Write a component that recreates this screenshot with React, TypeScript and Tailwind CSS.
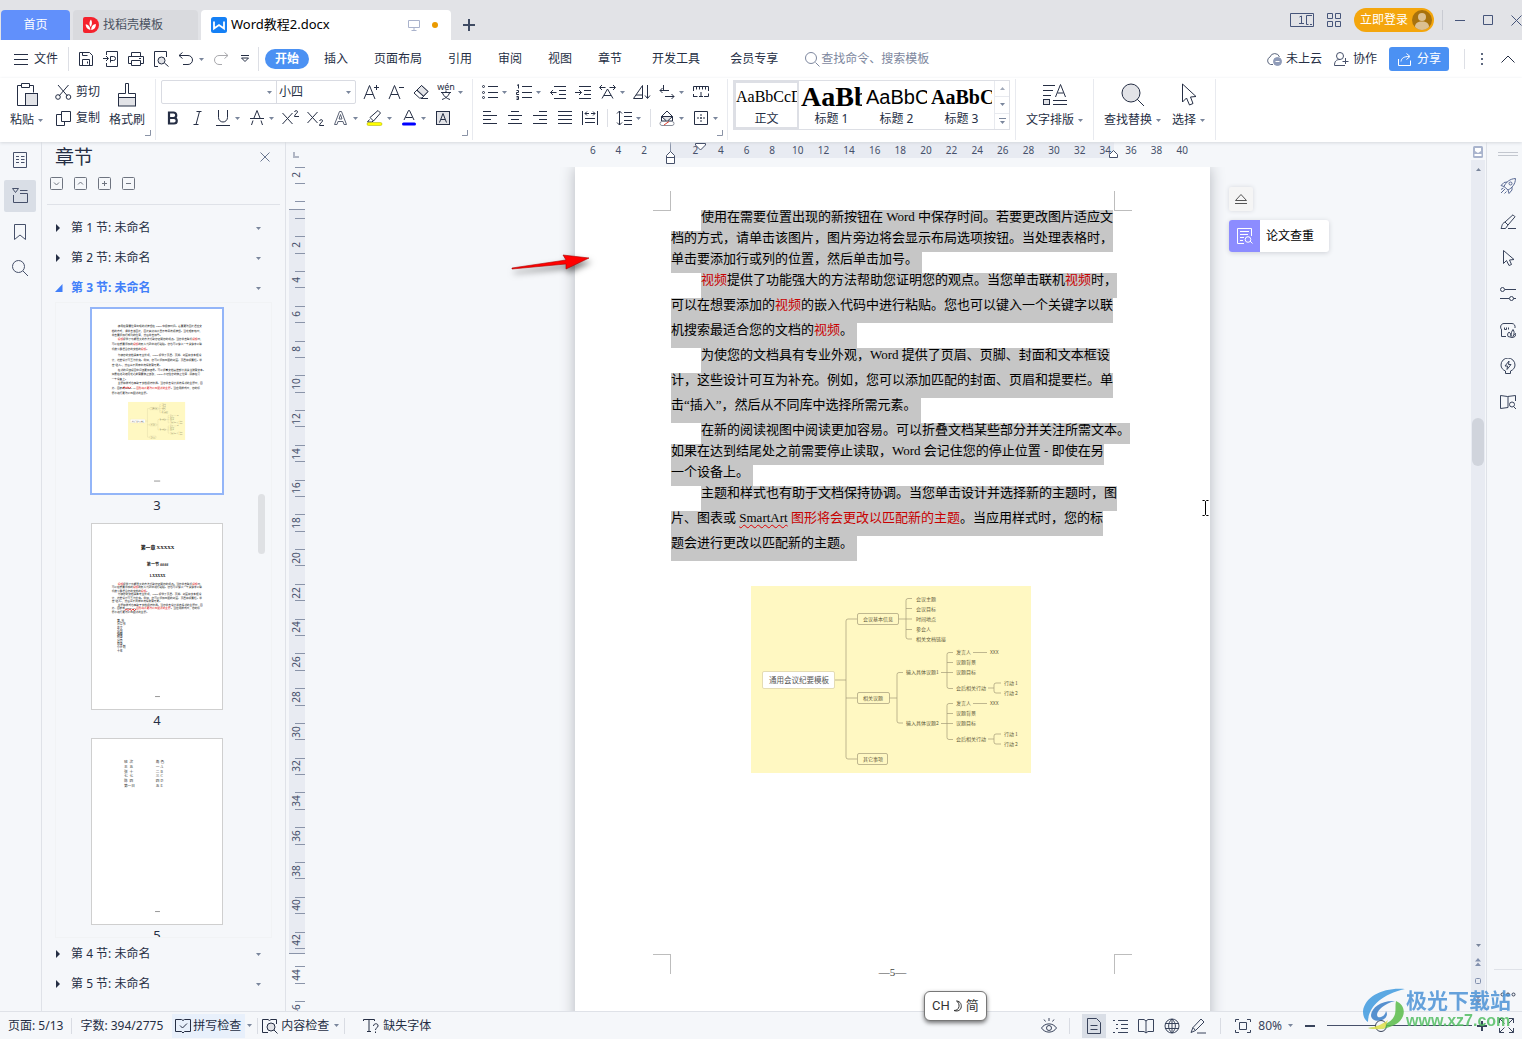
import type { ReactNode } from 'react';

type Part = string | { red?: string; typo?: string };
type Line = { indent?: boolean; end?: boolean; parts: Part[] };

const paragraphs: { loose: boolean; lines: Line[] }[] = [
  {
    loose: false,
    lines: [
      { indent: true, parts: ['使用在需要位置出现的新按钮在 Word 中保存时间。若要更改图片适应文'] },
      { parts: ['档的方式，请单击该图片，图片旁边将会显示布局选项按钮。当处理表格时，'] },
      { end: true, parts: ['单击要添加行或列的位置，然后单击加号。'] },
    ],
  },
  {
    loose: true,
    lines: [
      { indent: true, parts: [{ red: '视频' }, '提供了功能强大的方法帮助您证明您的观点。当您单击联机', { red: '视频' }, '时，'] },
      { parts: ['可以在想要添加的', { red: '视频' }, '的嵌入代码中进行粘贴。您也可以键入一个关键字以联'] },
      { end: true, parts: ['机搜索最适合您的文档的', { red: '视频' }, '。'] },
    ],
  },
  {
    loose: true,
    lines: [
      { indent: true, parts: ['为使您的文档具有专业外观，Word 提供了页眉、页脚、封面和文本框设'] },
      { parts: ['计，这些设计可互为补充。例如，您可以添加匹配的封面、页眉和提要栏。单'] },
      { end: true, parts: ['击“插入”，然后从不同库中选择所需元素。'] },
    ],
  },
  {
    loose: false,
    lines: [
      { indent: true, parts: ['在新的阅读视图中阅读更加容易。可以折叠文档某些部分并关注所需文本。'] },
      { parts: ['如果在达到结尾处之前需要停止读取，Word 会记住您的停止位置 - 即使在另'] },
      { end: true, parts: ['一个设备上。'] },
    ],
  },
  {
    loose: true,
    lines: [
      { indent: true, parts: ['主题和样式也有助于文档保持协调。当您单击设计并选择新的主题时，图'] },
      { parts: ['片、图表或 ', { typo: 'SmartArt' }, ' ', { red: '图形将会更改以匹配新的主题' }, '。当应用样式时，您的标'] },
      { end: true, parts: ['题会进行更改以匹配新的主题。'] },
    ],
  },
];

const styleCells = [
  { name: '正文', sample: 'AaBbCcDd', cls: "font-['Liberation_Serif',serif] text-[16px]" },
  { name: '标题 1', sample: 'AaBb', cls: "font-['Liberation_Serif',serif] text-[28px] font-bold" },
  { name: '标题 2', sample: 'AaBbC', cls: "font-['Liberation_Sans',sans-serif] text-[20px]" },
  { name: '标题 3', sample: 'AaBbC', cls: "font-['Liberation_Serif',serif] text-[20px] font-bold" },
];

const hRuler = [6, 4, 2, 0, 2, 4, 6, 8, 10, 12, 14, 16, 18, 20, 22, 24, 26, 28, 30, 32, 34, 36, 38, 40];
const vRuler = [2, 0, 2, 4, 6, 8, 10, 12, 14, 16, 18, 20, 22, 24, 26, 28, 30, 32, 34, 36, 38, 40, 42, 44, 46];

function Ico({ w = 16, h = 16, d, children, className = '' }: { w?: number; h?: number; d?: string; children?: ReactNode; className?: string }) {
  return (
    <svg width={w} height={h} viewBox={`0 0 ${w} ${h}`} fill="none" stroke="currentColor" className={`shrink-0 ${className}`} aria-hidden="true">
      {d && <path d={d} />}
      {children}
    </svg>
  );
}

function Caret({ className = '' }: { className?: string }) {
  return (
    <svg width="5" height="3" viewBox="0 0 5 3" className={`shrink-0 fill-[#7a869c] ${className}`} aria-hidden="true">
      <path d="M0 0h5L2.500 3z" />
    </svg>
  );
}

function Tool({ label, caret, children }: { label: string; caret?: boolean; children: ReactNode }) {
  return (
    <button aria-label={label} className={`flex h-[26px] shrink-0 items-center ${caret ? 'w-[34px]' : 'w-[25px]'}`}>
      <span className="flex w-6 shrink-0 justify-center">{children}</span>
      {caret && <Caret />}
    </button>
  );
}

function Corner() {
  return <Ico w={6} h={6} d="M5.500 0v5.500H0" className="absolute right-1 bottom-1 text-[#8a93a6]" />;
}

function TitleBar() {
  return (
    <header className="flex h-10 shrink-0 items-end bg-[#e2e3e7] pl-px">
      <button className="h-[30px] w-[69px] rounded-t-sm bg-[#6190fb] text-white">首页</button>
      <button className="ml-[3px] flex h-[30px] w-[125px] items-center rounded-t-sm bg-[#d9dade] pl-[10px] text-[#4a5261]">
        <svg width="16" height="16" viewBox="0 0 16 16" className="mr-1" aria-hidden="true">
          <path d="M2 0h6a8 8 0 0 1 0 16H2a2 2 0 0 1-2-2V2a2 2 0 0 1 2-2z" fill="#f5222d" />
          <path d="M7.500 13C3.500 12 2.500 9 2.800 7.200 5 7.500 7 9 7.500 13zM7.500 10C5.800 7 6.300 4.500 8 2.500 9.500 5 9.300 7.500 7.500 10zM8.300 13c-.2-3.500 1.700-5.800 4.500-6 .4 3-1.300 5.500-4.500 6z" fill="#fff" />
        </svg>
        找稻壳模板
      </button>
      <div className="ml-[3px] flex h-[30px] w-[250px] items-center rounded-t-sm bg-white pr-[13px] pl-[10px] text-black">
        <svg width="16" height="16" viewBox="0 0 16 16" className="mr-1" aria-hidden="true">
          <rect width="16" height="16" rx="2.500" fill="#1580f5" />
          <path d="M3 4.500v7l5-3.500 5 3.500v-7" fill="none" stroke="#fff" strokeWidth="1.800" />
        </svg>
        <span className="text-[13px]">Word教程2.docx</span>
        <Ico w={12} h={12} className="ml-auto text-[#aab3cc]" d="M.5 1.500h11v7H.5zM6 8.500v3M3.500 11.500h5" />
        <span className="ml-3 h-1.5 w-1.5 rounded-full bg-[#ea9a00]" />
      </div>
      <button aria-label="新建标签" className="ml-3 flex h-[30px] w-3 items-center">
        <Ico w={12} h={12} className="text-[#3f4b63]"><path d="M6 0v12M0 6h12" strokeWidth="2" /></Ico>
      </button>

      <div className="ml-auto flex h-10 items-center text-[#46557a]">
        <button aria-label="窗口" className="mr-[13px]">
          <Ico w={24} h={14} d="M.5.500h23v13H.5zM9.500 4l2-1v7M9 10.500h5M22 2.500h-5.500v9h2M20 11.500h2" />
        </button>
        <button aria-label="应用" className="mr-[13px]">
          <Ico w={14} h={14} d="M.5.500h5v5h-5zM8.500.500h5v5h-5zM.5 8.500h5v5h-5zM8.500 8.500h5v5h-5z" />
        </button>
        <button className="flex h-6 w-20 items-center justify-between rounded-full bg-[#f4a60d] pr-0.5 pl-1.5 text-white">
          立即登录
          <svg width="20" height="20" viewBox="0 0 20 20" aria-hidden="true">
            <circle cx="10" cy="10" r="10" fill="#a8720d" />
            <circle cx="10" cy="7" r="4" fill="#dcc091" />
            <path d="M3 17c0-4 3-5.500 7-5.500s7 1.500 7 5.500c-4 4-10 4-14 0z" fill="#dcc091" />
          </svg>
        </button>
        <span className="mx-2 h-5 w-px bg-[#c9cbd2]" />
        <button aria-label="最小化" className="ml-1"><Ico w={10} h={10} d="M0 5.500h10" /></button>
        <button aria-label="最大化" className="ml-[18px]"><Ico w={10} h={10} d="M.5.500h9v9h-9z" /></button>
        <button aria-label="关闭" className="ml-[18px]"><Ico w={11} h={11} d="M.5.500l10 10M10.500.500l-10 10" /></button>
      </div>
    </header>
  );
}

function MenuBar() {
  return (
    <nav className="flex h-[38px] shrink-0 items-center bg-white text-[#252e44]">
      <button className="flex items-center gap-1.5 pl-[14px]">
        <Ico w={14} h={11} d="M0 .5h14M0 5.500h14M0 10.500h14" />
        文件
      </button>
      <span className="ml-[10px] h-6 w-px bg-[#dddfe5]" />
      <button aria-label="保存" className="ml-[9px]">
        <Ico d="M1.500 1.500h10l3 3v10h-13zM4.500 14V8.500h7V14M4.500 1.500v3h5M9.500 10.500v2" />
      </button>
      <button aria-label="输出为PDF" className="ml-[9px]">
        <Ico d="M3.500 4V.5h11v15h-11V12M0 7.500h5M3 5l2.500 2.500L3 10M7.500 5.500v6M7.500 5.500h3a1.500 1.500 0 0 1 0 4h-3" />
      </button>
      <button aria-label="打印" className="ml-[9px]">
        <Ico d="M3.500 5V1.500h9V5M3.500 12.500h-3v-7h15v7h-3M3.500 9.500h9v5h-9zM11 7.500h2" />
      </button>
      <button aria-label="打印预览" className="ml-[9px]">
        <Ico d="M5 15.500H1.500V.5h12V6M11.500 12l4 3.500"><circle cx="8.500" cy="9.500" r="3.500" fill="#e2e3e7" /></Ico>
      </button>
      <button aria-label="撤销" className="ml-[9px] flex items-center gap-[5px]">
        <Ico d="M4.500 1.500L1 4.500l3.500 3M1 4.500h9a4.500 4.500 0 0 1 0 9H5" />
        <Caret />
      </button>
      <button aria-label="恢复" className="ml-[9px] text-[#a9a9ad]">
        <Ico d="M11.500 1.500L15 4.500l-3.500 3M15 4.500H6a4.500 4.500 0 0 0 0 9h3" />
      </button>
      <button aria-label="更多" className="ml-3"><Ico w={8} h={8} d="M0 .5h8M.5 3L4 6.500 7.500 3z" /></button>
      <span className="ml-[9px] h-6 w-px bg-[#dddfe5]" />
      <button className="ml-1.5 h-5 w-11 rounded-full bg-[#4b91f3] font-bold text-white">开始</button>
      <div className="ml-0.5 flex items-center">
        {['插入', '页面布局', '引用', '审阅', '视图', '章节'].map((m) => (
          <button key={m} className="px-[13px]">{m}</button>
        ))}
        <button className="ml-1 px-[13px]">开发工具</button>
        <button className="ml-1 px-[13px]">会员专享</button>
      </div>
      <label className="ml-[14px] flex items-center gap-px text-[#7d879e]">
        <Ico w={15} h={15} d="M10.500 10.500l4 4"><circle cx="6" cy="6" r="5.500" /></Ico>
        <input aria-label="搜索" placeholder="查找命令、搜索模板" className="w-28 bg-transparent outline-none placeholder:text-[#7d879e]" />
      </label>

      <div className="ml-auto flex items-center pr-[7px]">
        <button className="flex items-center gap-1">
          <Ico className="text-[#5d687f]" d="M7 13.500H4.500a4 4 0 0 1-.500-7.500 5 5 0 0 1 9.500 0">
            <circle cx="11.500" cy="10.500" r="4" fill="#8f9bb8" stroke="#8f9bb8" />
            <path d="M9.500 10.500h4" stroke="#fff" />
          </Ico>
          未上云
        </button>
        <button className="ml-3 flex items-center gap-1">
          <Ico w={15} h={14} className="text-[#46506a]" d="M.5 13.500C.5 9.500 2 7.500 6 7.500M.5 13.500H11M11.500 6v6M8.500 9.500h6"><circle cx="6" cy="4" r="3.500" /></Ico>
          协作
        </button>
        <button className="ml-3 flex h-6 w-[60px] items-center gap-1.5 rounded-[3px] bg-[#4b91f3] pl-[9px] text-white">
          <Ico w={13} h={13} d="M.5 6v6.500h12V7.500M3 8.500C3.500 5 6 3.500 11 3.500M8.500.5l3.500 3L8.500 6.500" />
          分享
        </button>
        <span className="ml-[15px] h-5 w-px bg-[#dddfe5]" />
        <button aria-label="更多选项" className="ml-4 flex flex-col gap-[3px]">
          <span className="h-0.5 w-0.5 bg-[#5d687f]" />
          <span className="h-0.5 w-0.5 bg-[#5d687f]" />
          <span className="h-0.5 w-0.5 bg-[#5d687f]" />
        </button>
        <button aria-label="折叠功能区" className="ml-[18px]"><Ico w={14} h={8} d="M.5 7.500L7 1l6.500 6.500" /></button>
      </div>
    </nav>
  );
}

function FontGroup() {
  return (
    <div className="relative w-[317px] shrink-0 border-r border-[#e8eaef] pl-[5px]">
      <div className="flex h-[26px] items-center">
        <div className="mr-[3px] flex h-6 rounded-xs border border-[#d9dbe2]">
          <div className="relative flex w-[115px] items-center border-r border-[#d9dbe2]">
            <select aria-label="字体" className="h-full w-full appearance-none bg-transparent outline-none"><option> </option></select>
            <Caret className="pointer-events-none absolute right-1" />
          </div>
          <div className="relative flex w-[78px] items-center">
            <select aria-label="字号" className="h-full w-full appearance-none bg-transparent pl-0.5 outline-none"><option>小四</option></select>
            <Caret className="pointer-events-none absolute right-1" />
          </div>
        </div>
        <Tool label="增大字号"><Ico d="M1 15L6.500 1.500 12 15M3 10.500h7M11 3.500h5M13.500 1v5" /></Tool>
        <Tool label="减小字号"><Ico d="M1 15L6.500 1.500 12 15M3 10.500h7M11 3.500h5" /></Tool>
        <Tool label="清除格式">
          <Ico d="M4 6.500l6 5.500"><path d="M8.500 1.500l6.500 6-6 6.500H6.500l-5.500-5z" /><path d="M8.500 1.500l6.500 6-4.500 4.500L4 6z" fill="#e2e3e7" /><path d="M8 14.500h7" /></Ico>
        </Tool>
        <Tool label="拼音指南" caret>
          <Ico d="M3 8.500h10M8 6.500v2M4.500 9c1 3 4 5.500 7.500 6.500M11.500 9c-1 3-4 5.500-7.500 6.500" className="overflow-visible">
            <text x="8" y="6" fontSize="9" textAnchor="middle" fill="currentColor" stroke="none">wén</text>
          </Ico>
        </Tool>
      </div>
      <div className="flex h-[26px] items-center">
        <Tool label="加粗"><Ico w={12} h={14}><path d="M2 1.500h4.500a2.500 2.500 0 0 1 0 5.500H2zM2 7h5a2.700 2.700 0 0 1 0 5.500H2z" strokeWidth="2.200" /></Ico></Tool>
        <Tool label="倾斜"><Ico w={10} h={14} d="M3.500.500h5M.5 13.500h5M6.500.500l-3.500 13" /></Tool>
        <Tool label="下划线" caret><Ico d="M3.500 0v7.500a4.500 4.500 0 0 0 9 0V0M1 15.500h14" /></Tool>
        <Tool label="删除线" caret><Ico d="M1 8.500h14M5 8L8 .5 11 8M4 10.500L2.500 15M12 10.500l1.500 4.500" /></Tool>
        <Tool label="上标"><Ico w={18} d="M.5 3l10 11M10.500 3l-10 11M12.500 2c.5-2 3.500-1.500 3 0-.3 1.200-3 2.500-3 4.500H17" /></Tool>
        <Tool label="下标"><Ico w={18} d="M.5 2l10 11M10.500 2l-10 11M12.500 11c.5-2 3.500-1.500 3 0-.3 1.200-3 2.500-3 4.500H17" /></Tool>
        <Tool label="文字效果" caret>
          <Ico w={14} h={14} className="text-[#5a6275]" d="M.500 13.500L5.500.5h2l5 13h-2.500l-1-3h-5l-1 3zM5 8h3L6.500 3.500z" />
        </Tool>
        <Tool label="突出显示" caret>
          <Ico w={18} d="M3.500 9.500l-2 2.500h4l2-1 7-8-2.500-2.500L4 7.500l3.500 3.500">
            <rect x="1" y="12.500" width="15" height="3" rx="1.500" fill="#ff0" stroke="#a8a800" strokeWidth=".5" />
          </Ico>
        </Tool>
        <Tool label="字体颜色" caret>
          <Ico d="M3 10L7.500.5h1L13 10M4.500 7.500h7"><rect x="1" y="12.500" width="14" height="3" rx="1.500" fill="#00f" stroke="none" /></Ico>
        </Tool>
        <Tool label="字符底纹">
          <Ico w={14} h={14}><rect x=".5" y=".5" width="13" height="13" fill="#e2e3e7" /><path d="M3.500 11.500L7 2.500l3.500 9M5 8.500h4" /></Ico>
        </Tool>
      </div>
      <Corner />
    </div>
  );
}

function ParagraphGroup() {
  return (
    <div className="relative w-[255px] shrink-0 border-r border-[#e8eaef] pl-[5px]">
      <div className="flex h-[26px] items-center">
        <Tool label="项目符号" caret>
          <Ico d="M6 2.500h10M6 8.500h10M6 13.500h10"><circle cx="1.500" cy="2.500" r="1" /><circle cx="1.500" cy="8.500" r="1" /><circle cx="1.500" cy="13.500" r="1" /></Ico>
        </Tool>
        <Tool label="编号" caret>
          <Ico d="M6 2.500h10M6 8.500h10M6 13.500h10M1 1.500L2.500.5v4M.5 6.500h2v2h-2v2h2.500M.5 12.500h2v3h-2M.5 14h2" />
        </Tool>
        <Tool label="减少缩进"><Ico d="M4 2.500h12M9 6.500h7M9 10.500h7M4 14.500h12M.5 8.500h6M3 6L.5 8.500 3 11" /></Tool>
        <Tool label="增加缩进"><Ico d="M4 2.500h12M9 6.500h7M9 10.500h7M4 14.500h12M0 8.500h6.500M4 6l2.500 2.500L4 11" /></Tool>
        <Tool label="字符缩放" caret><Ico w={18} d="M3 14.500L8.500 5l5.500 9.500M5 11.500h7M1 3.500h5.500M3 1L.5 3.500 3 6M16 3.500h-5.500M14 1l2.500 2.500L14 6" /></Tool>
        <Tool label="文字方向"><Ico w={18} d="M.5 14.500h9v-13zM3 11h6M14.500 1v13M12 11.500l2.500 3 2.500-3" /></Tool>
        <Tool label="换行" caret><Ico d="M4.500 1v5.500M1 6.500h9M3.500 4L1 6.500 3.500 9M6 12.500h9M12.500 10l2.500 2.500-2.500 2.500" /></Tool>
        <Tool label="制表位"><Ico d="M.5 7V2.500h15V7M3.500 3v2.500M6.500 3v2.500M9.500 3v2.500M12.500 3v2.500M.5 13v-3M.5 12.500h4M11 12.500h4.500V9.500M8 8v5M6 12.500h4" /></Tool>
      </div>
      <div className="flex h-[26px] items-center">
        <Tool label="左对齐"><Ico w={14} h={14} d="M0 .5h8M0 4.500h14M0 8.500h8M0 12.500h14" /></Tool>
        <Tool label="居中"><Ico w={14} h={14} d="M3 .5h8M0 4.500h14M3 8.500h8M0 12.500h14" /></Tool>
        <Tool label="右对齐"><Ico w={14} h={14} d="M6 .5h8M0 4.500h14M6 8.500h8M0 12.500h14" /></Tool>
        <Tool label="两端对齐"><Ico w={14} h={14} d="M0 .5h14M0 4.500h14M0 8.500h14M0 12.500h14" /></Tool>
        <Tool label="分散对齐"><Ico d="M.5 1v14M15.500 1v14M3 8.500h10M3 12.500h10M3 3.500h4M5 1.500l-2 2 2 2M13 3.500H9M11 1.500l2 2-2 2" /></Tool>
        <span className="mx-1 h-[18px] w-px bg-[#dddfe5]" />
        <Tool label="行距" caret><Ico d="M3.500 1v14M1 3.500L3.500 1 6 3.500M1 12.500L3.500 15 6 12.500M8 2.500h8M8 6.500h8M8 10.500h8M8 14.500h8" /></Tool>
        <span className="mx-1 h-[18px] w-px bg-[#dddfe5]" />
        <Tool label="底纹" caret>
          <Ico><path d="M8 1L2.500 6.500V11h11V6.500z" /><path d="M2.500 6.500L8 11.500l5.500-5z" fill="#e2e3e7" /><rect x="1" y="11.500" width="14" height="4" rx="2" fill="#fff" stroke="#8a8f9b" /><path d="M5 15l5-3.500" stroke="#e0412f" /></Ico>
        </Tool>
        <Tool label="边框" caret><Ico d="M1.500 1.500h13v13h-13z"><path d="M8 4v8M4 8h8" strokeDasharray="2 1" /></Ico></Tool>
      </div>
      <Corner />
    </div>
  );
}

function BigButton({ label, children, caret = true }: { label: string; children: ReactNode; caret?: boolean }) {
  return (
    <button className="flex flex-col items-center whitespace-nowrap">
      <span className="flex h-8 items-center">{children}</span>
      <span className="flex h-[18px] items-center gap-1 leading-4">{label}{caret && <Caret />}</span>
    </button>
  );
}

function Ribbon() {
  return (
    <section className="relative z-10 flex h-16 shrink-0 bg-white pt-px pb-0.5 text-[#252e44] shadow-[0_1px_3px_#d5d8de]">
      <div className="relative flex w-[156px] shrink-0 border-r border-[#e8eaef] pl-[10px]">
        <BigButton label="粘贴">
          <Ico w={22} h={24} d="M5 2.500H1.500v20h8M14 2.500h3.500v7M5.500.500h8v4h-8z"><rect x="9.500" y="10.500" width="12" height="12" fill="#e2e3e7" /></Ico>
        </BigButton>
        <div className="ml-3 flex flex-col">
          <button className="flex h-[26px] items-center gap-1 whitespace-nowrap">
            <Ico w={17} d="M3 1l9.500 11M13.500 1L4 12"><circle cx="3" cy="13" r="2.300" /><circle cx="13.500" cy="13" r="2.300" /></Ico>
            剪切
          </button>
          <button className="flex h-[26px] items-center gap-1 whitespace-nowrap">
            <Ico w={17} d="M6 4.500H1.500v11h8V12M6.500 1.500h9v10h-9z" />
            复制
          </button>
        </div>
        <div className="ml-[9px]">
          <BigButton label="格式刷" caret={false}>
            <Ico w={18} h={24} d="M7.500 10.500V.5h3v10h7v4H.5v-4z"><rect x=".5" y="14.500" width="17" height="8.500" fill="#e2e3e7" /></Ico>
          </BigButton>
        </div>
        <Corner />
      </div>

      <FontGroup />
      <ParagraphGroup />

      <div className="flex shrink-0 border-r border-[#e8eaef] px-[5px] pt-px">
        <div className="flex h-[50px] border border-[#dddfe5]">
          {styleCells.map((s, i) => (
            <button key={s.name} className={`flex w-[65px] flex-col items-center overflow-hidden border-2 ${i === 0 ? 'border-[#dddfe5]' : 'border-transparent'}`}>
              <span className={`flex h-[30px] w-full items-center overflow-hidden whitespace-nowrap text-black ${s.cls}`}>{s.sample}</span>
              <span className="leading-4">{s.name}</span>
            </button>
          ))}
          <div className="flex w-[15px] flex-col divide-y divide-[#e8eaef] border-l border-[#e8eaef]">
            <button aria-label="上一行" className="flex flex-1 items-center justify-center"><Caret className="rotate-180 opacity-70" /></button>
            <button aria-label="下一行" className="flex flex-1 items-center justify-center"><Caret /></button>
            <button aria-label="更多样式" className="flex flex-1 flex-col items-center justify-center gap-0.5">
              <span className="h-px w-[7px] bg-[#7a869c]" />
              <Caret />
            </button>
          </div>
        </div>
      </div>

      <div className="flex shrink-0 border-r border-[#e8eaef] px-[10px]">
        <BigButton label="文字排版">
          <Ico w={24} h={22} d="M0 1.500h12M0 6.500h10M0 11.500h8M12.500 13L17.500.500l5 12.500M14.500 9h6M10 16.500h14M10 20.500h14"><rect x=".5" y="15.500" width="6" height="5" fill="#e2e3e7" /></Ico>
        </BigButton>
      </div>
      <div className="flex shrink-0 gap-[11px] border-r border-[#e8eaef] px-[10px]">
        <BigButton label="查找替换">
          <Ico w={24} h={24} d="M16 16l7 7"><circle cx="10" cy="10" r="9" fill="#e2e3e7" /></Ico>
        </BigButton>
        <BigButton label="选择">
          <Ico w={16} h={24} d="M1.500 1v18l4-4M1.500 1L15 13.500l-5.500.500M5.500 15L8.500 22M9.500 14L12 20.500 8.500 22" />
        </BigButton>
      </div>
    </section>
  );
}

function LeftRail() {
  return (
    <aside className="flex w-[42px] shrink-0 flex-col gap-1 border-r border-[#dfe2e8] pt-0.5 pl-1 text-[#46506a]">
      <button aria-label="目录" className="flex h-8 w-8 items-center justify-center">
        <Ico d="M1.500.500h13v15h-13zM4 4.500h3M4 7.500h3M4 10.500h3M9 4.500h3.500M9 7.500h3.500M9 10.500h3.500" />
      </button>
      <button aria-label="章节" className="flex h-8 w-8 items-center justify-center rounded-xs bg-[#d9dee6]">
        <Ico d="M.5.500h6l-3 4zM8 2.500h7.500M8 5.500h7.500v9H1.500V7" />
      </button>
      <button aria-label="书签" className="flex h-8 w-8 items-center justify-center"><Ico d="M2.500.500h11v15L8 11l-5.500 4.500z" /></button>
      <button aria-label="查找" className="flex h-8 w-8 items-center justify-center"><Ico d="M11 11l5 5"><circle cx="6.500" cy="6.500" r="6" /></Ico></button>
    </aside>
  );
}

function SectionRow({ n, open }: { n: number; open?: boolean }) {
  return (
    <button className={`flex h-[30px] w-full shrink-0 items-center pt-0.5 pr-6 pl-[13px] ${open ? 'font-bold text-[#417ff9]' : 'text-[#252e44]'}`}>
      <svg width="8" height="8" viewBox="0 0 8 8" fill="currentColor" className="mr-2" aria-hidden="true">
        <path d={open ? 'M7.500 0v8H0z' : 'M1 0l4 4-4 4z'} />
      </svg>
      第 {n} 节: 未命名
      <Caret className="ml-auto" />
    </button>
  );
}

// the document's paragraphs at preview size; pitch overrides the line spacing
function TinyLines({ top, from = 0, skip = -1, pitch }: { top: number; from?: number; skip?: number; pitch?: number }) {
  let y = top;
  const rows: ReactNode[] = [];
  paragraphs.forEach((p, pi) => {
    if (pi < from || pi === skip) return;
    p.lines.forEach((l, li) => {
      rows.push(
        <text key={`${pi}-${li}`} x={l.indent ? 126 : 96} y={y + 12} xmlSpace="preserve">
          {l.parts.map((part, i) =>
            typeof part === 'string' ? part : <tspan key={i} fill={part.red ? '#d00' : undefined}>{part.red ?? part.typo}</tspan>
          )}
        </text>
      );
      y += pitch ?? (p.loose ? 25 : 21);
    });
  });
  return <g fontSize="13" fill="#111" stroke="none">{rows}</g>;
}

function Thumb({ children }: { children: ReactNode }) {
  return <svg viewBox="0 0 635 898" className="h-full w-full font-['Liberation_Serif','Noto_Sans_CJK_SC',serif]" aria-hidden="true">{children}</svg>;
}

function SectionPanel() {
  return (
    <aside className="flex w-[244px] shrink-0 flex-col border-r border-[#dfe2e8]">
      <div className="flex h-[30px] shrink-0 items-center justify-between pr-[15px] pl-[13px]">
        <h2 className="pt-0.5 text-[19px] text-[#252e44]">章节</h2>
        <button aria-label="关闭面板"><Ico w={10} h={10} className="text-[#6a7790]" d="M.5.500l9 9M9.500.500l-9 9" /></button>
      </div>
      <div className="mx-[5px] flex h-[33px] shrink-0 gap-[11px] border-b border-[#dfe2e8] pt-[5px] pl-[3px] text-[#6e7480]">
        {[
          ['展开', 'M4 5.500l2.500 2.500L9 5.500'],
          ['收起', 'M4 7.500L6.500 5 9 7.500'],
          ['新增', 'M6.500 4v5M4 6.500h5'],
          ['删除', 'M4 6.500h5'],
        ].map(([label, d]) => (
          <button key={label} aria-label={label} className="h-[13px]">
            <Ico w={13} h={13} d={d}><rect x=".5" y=".5" width="12" height="12" rx="1" /></Ico>
          </button>
        ))}
      </div>
      <div className="mt-[7px] flex min-h-0 flex-1 flex-col pb-[13px]">
        <SectionRow n={1} />
        <SectionRow n={2} />
        <SectionRow n={3} open />
        <div className="relative mx-[13px] min-h-0 flex-1 overflow-hidden border border-[#f1f3f5] pt-1">
          <div className="flex w-[202px] flex-col items-center text-[13px] leading-5 text-[#252e44]">
            <div className="h-[188px] w-[134px] shrink-0 border-2 border-[#93b5f8] bg-white">
              <Thumb>
                <TinyLines top={77} />
                <path d="M150 388l8-8 8 8 8-8 8 8 8-8" fill="none" stroke="#d00" strokeWidth="4" />
                <g transform="translate(176 453)"><MindMap /></g>
                <path d="M303 840h30" stroke="#555" strokeWidth="3" />
              </Thumb>
            </div>
            <div className="h-7 shrink-0">3</div>
            <div className="h-[187px] w-[132px] shrink-0 border border-[#cfcfcf] bg-white">
              <Thumb>
                <g textAnchor="middle" fontWeight="bold">
                  <text x="320" y="118" fontSize="24">第一章 XXXXX</text>
                  <text x="320" y="204" fontSize="20">第一节 ####</text>
                  <text x="320" y="258" fontSize="18">1.XXXXX</text>
                </g>
                <TinyLines top={282} from={1} skip={3} pitch={17} />
                <g fontSize="14">
                  {['第1节', '分章节', '正文', '小节', '插图', '附录', '分页', '目录', '小计划', '十年'].map((t, i) => (
                    <text key={i} x="122" y={476 + i * 16}>{t}</text>
                  ))}
                </g>
                <path d="M160 420l8-8 8 8 8-8 8 8 8-8 8 8 8-8" fill="none" stroke="#d00" strokeWidth="4" />
                <path d="M308 840h24" stroke="#555" strokeWidth="3" />
              </Thumb>
            </div>
            <div className="h-7 shrink-0">4</div>
            <div className="h-[187px] w-[132px] shrink-0 border border-[#cfcfcf] bg-white">
              <Thumb>
                <g fontSize="18" fill="#333">
                  {['班  次', '王  五', '张  十', '七  七', '陈  四', '第一日'].map((t, i) => (
                    <text key={t} x="156" y={115 + i * 23} xmlSpace="preserve">{t}</text>
                  ))}
                  {['角 色', '一 A', '二 B', '三 C', '四 D', '五 E'].map((t, i) => (
                    <text key={t} x="312" y={115 + i * 23} xmlSpace="preserve">{t}</text>
                  ))}
                </g>
                <path d="M308 840h24" stroke="#555" strokeWidth="3" />
              </Thumb>
            </div>
            <div className="h-7 shrink-0">5</div>
          </div>
          <span className="absolute top-[191px] right-1.5 h-[60px] w-[7px] rounded-full bg-[#dfe1e4]" />
        </div>
        <SectionRow n={4} />
        <SectionRow n={5} />
      </div>
    </aside>
  );
}

function VerticalRuler() {
  return (
    <div className="ml-[3px] w-4 shrink-0 overflow-hidden">
      <div className="flex h-4 items-end pl-1"><Ico w={6} h={6} className="text-[#b0b6c4]"><path d="M1 0v5h5" strokeWidth="2" /></Ico></div>
      <div className="flex h-[869px] flex-col bg-[linear-gradient(transparent_51px,#8a94a9_51px,#8a94a9_52px,#e8ebf2_52px,#e8ebf2_795px,#8a94a9_795px,#8a94a9_796px,transparent_796px)]">
        {vRuler.map((n, i) => (
          <div key={i} className="flex min-h-0 flex-1 items-center justify-end">
            <div className="flex h-1/2 w-[10px] items-center justify-center border-y border-[#8a94a9]">
              <span className="mr-2 -rotate-90 text-[10px] leading-none text-[#46506a]">{n || ''}</span>
            </div>
          </div>
        ))}
      </div>
    </div>
  );
}

function Branch({ x, y, t, anchor }: { x: number; y: number; t: string; anchor?: 'middle' }) {
  return <text x={x} y={y + 2} fontSize="5" textAnchor={anchor} fill="#5f5b3c" stroke="none">{t}</text>;
}

function MindMap() {
  return (
    <svg width="280" height="187" viewBox="0 0 280 187" fill="none" stroke="#a39b78" strokeWidth=".7" className="font-['Noto_Sans_CJK_SC',sans-serif]">
      <rect width="280" height="187" fill="#fff8c2" stroke="none" />
      <path d="M84 94h11M106 33h-9q-2 0-2 2v136q0 2 2 2h9M95 112h11" />
      <path d="M147 33h14M161 12.500h-4q-2 0-2 2V51q0 2 2 2h4M155 22.500h6M155 43.500h6" />
      <path d="M138 112h8M152 86.500h-4q-2 0-2 2V135q0 2 2 2h4" />
      {[0, 51].map((dy) => (
        <g key={dy}>
          <path transform={`translate(0 ${dy})`} d="M190 86.500h12M202 66.500h-4q-2 0-2 2v32q0 2 2 2h4M196 76.500h6M222 66.500h14M237 102h6M250 97h-5q-2 0-2 2v6q0 2 2 2h5" />
          <Branch x={205} y={66 + dy} t="发言人" />
          <Branch x={239} y={66 + dy} t="XXX" />
          <Branch x={205} y={76 + dy} t="议题背景" />
          <Branch x={205} y={86 + dy} t="议题目标" />
          <Branch x={205} y={102 + dy} t="会后相关行动" />
          <Branch x={253} y={97 + dy} t="行动 1" />
          <Branch x={253} y={107 + dy} t="行动 2" />
        </g>
      ))}
      <rect x="11.500" y="85.500" width="72" height="17" rx="1.500" fill="#fff" stroke="#d8cfa0" />
      <text x="48" y="97" fontSize="7.500" textAnchor="middle" fill="#555" stroke="none">通用会议纪要模板</text>
      <rect x="106.500" y="27.500" width="41" height="11" rx="1.500" fill="#fff8c2" />
      <rect x="106.500" y="106.500" width="32" height="11" rx="1.500" fill="#fff8c2" />
      <rect x="106.500" y="167.500" width="30" height="11" rx="1.500" fill="#fff8c2" />
      <Branch x={127} y={33} t="会议基本信息" anchor="middle" />
      <Branch x={122} y={112} t="相关议题" anchor="middle" />
      <Branch x={122} y={173} t="其它事项" anchor="middle" />
      {['会议主题', '会议目标', '时间地点', '参会人', '相关文档链接'].map((t, i) => (
        <Branch key={t} x={165} y={12.500 + i * 10} t={t} />
      ))}
      <Branch x={155} y={86} t="输入具体议题1" />
      <Branch x={155} y={137} t="输入具体议题2" />
    </svg>
  );
}

function HorizontalRuler() {
  return (
    <div className="flex h-[25px] shrink-0 justify-center pl-[9px]">
      <div className="relative h-4 w-[635px] bg-[linear-gradient(to_right,transparent_95px,#8a94a9_95px,#8a94a9_96px,#e8ebf2_96px,#e8ebf2_539px,transparent_539px)] pr-[15px] pl-[5px]">
        <div className="flex h-4 items-center">
          {hRuler.map((n, i) => (
            <span key={i} className="min-w-0 flex-1 text-center text-[10px] leading-none text-[#46506a]">{n || ''}</span>
          ))}
        </div>
        <Ico w={12} h={8} className="absolute top-px left-[120px] z-20"><path d="M.5.500h10v1.500l-5 5-5-5z" fill="#fff" stroke="#46506a" /></Ico>
        <Ico w={10} h={13} className="absolute top-[9px] left-[91px]"><path d="M.5 12.500v-8l4-4 4 4v8zM.5 6.500h8" fill="#fff" stroke="#46506a" /></Ico>
        <Ico w={10} h={8} className="absolute top-2 left-[534px]"><path d="M.5 7.500v-3l4-4 4 4v3z" fill="#fff" stroke="#46506a" /></Ico>
      </div>
    </div>
  );
}

function Page() {
  return (
    <article className="relative flex h-[864px] w-[635px] shrink-0 flex-col bg-white pt-6 shadow-[0_0_14px_#b4b7bd] font-['Liberation_Serif','Noto_Sans_CJK_SC',serif] text-[13px] text-black">
      <div className="flex shrink-0 justify-between px-[78px]">
        <span className="h-5 w-[18px] border-r border-b border-[#bdbdbd]" />
        <span className="h-5 w-[18px] border-b border-l border-[#bdbdbd]" />
      </div>
      <div className="-mt-px flex h-[744px] shrink-0 flex-col px-[96px]">
        {paragraphs.map((p, pi) => (
          <div key={pi}>
            {p.lines.map((l, li) => (
              <p
                key={li}
                className={`w-fit bg-[#c6c6c6] leading-[14px] whitespace-pre ${p.loose ? 'h-[25px]' : 'h-[21px]'} ${l.indent ? 'ml-[30px]' : ''} ${l.end ? 'pr-1' : ''}`}
              >
                {l.parts.map((part, i) => {
                  if (typeof part === 'string') return part;
                  if (part.typo) return <span key={i} className="underline decoration-[#d00] decoration-wavy decoration-1 underline-offset-2">{part.typo}</span>;
                  return <span key={i} className="text-[#c80000]">{part.red}</span>;
                })}
              </p>
            ))}
          </div>
        ))}
        <div className="mt-[25px] flex justify-center pr-1"><MindMap /></div>
      </div>
      <div className="flex h-6 shrink-0 justify-between px-[78px]">
        <span className="h-5 w-[18px] border-t border-r border-[#bdbdbd]" />
        <span className="self-end text-[11px] leading-3 text-[#444]">—5—</span>
        <span className="h-5 w-[18px] border-t border-l border-[#bdbdbd]" />
      </div>

      <svg width="86" height="28" viewBox="0 0 86 28" className="absolute top-[82px] left-[-65px] overflow-visible drop-shadow-[2px_4px_3px_#00000080]" aria-hidden="true">
        <path d="M2 19L56 11 53 6l26 3-23 11v-5L2 20z" fill="#f00" stroke="#a00" strokeWidth=".6" />
      </svg>

      <div className="absolute top-5 left-full ml-[19px] flex flex-col gap-[9px] font-['Noto_Sans','Noto_Sans_CJK_SC',sans-serif] text-xs">
        <button aria-label="收起" className="flex h-6 w-6 items-center justify-center rounded-xs bg-[#f5f5f5] text-[#555] shadow-[0_0_4px_#d5d8de]">
          <Ico w={12} h={12} d="M.5 7.500L6 1.500l5.500 6zM0 10.500h12" />
        </button>
        <button className="flex h-8 w-[100px] items-center overflow-hidden rounded-[3px] bg-white shadow-[0_1px_5px_#cdd0d6]">
          <span className="flex h-8 w-[31px] items-center justify-center bg-[#8c8cff] text-white">
            <Ico w={17} h={16} d="M8 15.500H1.500V.5h14V8M4 3.500h9M4 6.500h8M4 9.500h4M4 12.500h3M14 13l2.500 2.500"><circle cx="12" cy="11.500" r="2.800" /></Ico>
          </span>
          <span className="pl-1.5">论文查重</span>
        </button>
      </div>
      <Ico w={7} h={16} className="absolute top-[333px] left-[627px] text-black" d="M.5.500h2l1 1 1-1h2M.5 15.500h2l1-1 1 1h2M3.500 1.500v13" />
    </article>
  );
}

function ScrollColumn() {
  return (
    <div className="flex w-[14px] shrink-0 flex-col items-center bg-[#e8ebf2] text-[#8391ae]">
      <div className="flex h-[18px] w-full shrink-0 items-end justify-center bg-[#f5f7fa] pb-0.5">
        <svg width="10" height="12" viewBox="0 0 10 12" aria-hidden="true">
          <rect width="10" height="12" rx="1.500" fill="#a9b4cd" />
          <path d="M2 2h6v3L5 7 2 5zM1.500 8h7v2h-7z" fill="#fff" />
        </svg>
      </div>
      <Caret className="mt-2 rotate-180" />
      <span className="mt-[247px] h-12 w-3 rounded-full bg-[#d0d4dc]" />
      <Caret className="mt-auto" />
      <Ico w={6} h={8} className="mt-[11px]"><path d="M0 3.500L3 0l3 3.500zM0 8l3-3.500L6 8z" fill="currentColor" stroke="none" /></Ico>
      <Ico w={6} h={6} className="mt-3"><rect x=".5" y=".5" width="5" height="5" rx="1" /></Ico>
      <Ico w={6} h={8} className="mt-3 mb-[7px] rotate-180"><path d="M0 3.500L3 0l3 3.500zM0 8l3-3.500L6 8z" fill="currentColor" stroke="none" /></Ico>
    </div>
  );
}

function RightRail() {
  return (
    <aside className="ml-px flex w-9 shrink-0 flex-col items-center border-l border-[#dfe2e8] pt-[10px] pl-[7px] text-[#38435b]">
      <span className="h-1 w-5 shrink-0 border-y border-[#c3c7cf]" />
      <div className="mt-[22px] flex flex-col gap-5">
        <button aria-label="快捷"><Ico className="text-[#5a6a94]" d="M4 8.500C6 4 10 .8 15.500.5 15.500 6 12 10 8 12zM4 8.500L1 7.500l3-3 3-.500M8 12l1 3.500 3-3.500V9M1 11.500L3.500 10M1 15l4-4M4.500 15.500l2-2"><circle cx="10.500" cy="5.500" r="1.500" /></Ico></button>
        <button aria-label="样式"><Ico d="M5 8L13 .8l2 2L8 11M5 8l3 3-2.500 3.500H1C2 13 1.500 9.500 5 8zM8 14.500h8" /></button>
        <button aria-label="选择"><Ico d="M3.500.500v13l3-3 2.500 5 2.500-1-2-4.500 4.500-.500z" /></button>
        <button aria-label="属性"><Ico d="M5 3.500h11M0 12.500h9M13.500 12.500H16"><circle cx="2.500" cy="3.500" r="2" /><circle cx="11.500" cy="12.500" r="2" /></Ico></button>
        <button aria-label="素材"><Ico d="M2 8C-.5 6 .5 1.500 4 1.500h8c2 0 3.500 2 3 4.500M1.500 7.500v7H6M4.500 5.500v2h2v-2M8.500 5.500v2M8 14.500c-1-2 0-3.500 1-4.500 1.500 1 2 2.500 2 4.500 0-3 .5-5 2-7 1.500 2 1.500 4 0 7 1-1.500 1.500-2.500 3-3 0 2.500-1.500 4-4 4z" /></button>
        <button aria-label="创意"><Ico d="M5.500 13v2.500h5V13C13 12 15 10 15 7A7 7 0 0 0 1 7c0 3 2 5 4.500 6zM9 3L5 8h2.500L7 11.500l4-5H8.500z" /></button>
        <button aria-label="查重"><Ico d="M8 13.500L.5 14.500V1.500l7 1 8-1V7M8 2.500v11M14 13l2 2"><circle cx="12" cy="10.500" r="2.500" /></Ico></button>
      </div>
      <div className="mt-auto mb-[14px] flex w-full justify-center border-t border-[#dfe2e8] pt-[22px]">
        <button aria-label="更多"><Ico w={16} h={5}><circle cx="2.500" cy="2.500" r="1.500" /><circle cx="8" cy="2.500" r="1.500" /><circle cx="13.500" cy="2.500" r="1.500" /></Ico></button>
      </div>
    </aside>
  );
}

function Sep({ className = '' }: { className?: string }) {
  return <span className={`h-4 w-px shrink-0 bg-[#d9dce3] ${className}`} />;
}

function StatusBar() {
  return (
    <footer className="flex h-7 shrink-0 items-center border-t border-[#dfe2e8] pl-2 whitespace-nowrap text-[#252e44]">
      <span>页面: 5/13</span>
      <Sep className="mx-2" />
      <span>字数: 394/2775</span>
      <button className="ml-[9px] flex h-6 w-[73px] items-center gap-0.5 bg-[#e8f0fb] pl-[3px]">
        <Ico d="M8 2.500l-1.500-1H.500v12h6L8 15l1.500-1.500h6v-12h-6zM5 7.500l2.500 2.500L12 5.500" />
        拼写检查
      </button>
      <Caret className="ml-0.5" />
      <Sep className="ml-[5px]" />
      <button className="ml-1 flex items-center gap-[3px]">
        <Ico d="M6 14.500H.5v-13H6l1.500 1 1.500-1h5.500V6M12 12l3.500 3.500"><circle cx="9" cy="9" r="4" fill="#e2e3e7" /></Ico>
        内容检查
        <Caret className="ml-0.5" />
      </button>
      <Sep className="ml-[5px]" />
      <button className="ml-[18px] flex items-center gap-1">
        <Ico d="M.5 3V1.500h11V3M6 1.500v12M4 13.500h4M10.500 8c0-3 5-3 4.500 0 0 2-2.500 1.500-2.500 4M12.500 13.500v1.500" />
        缺失字体
      </button>

      <div className="ml-auto flex items-center pr-2 text-[#38435b]">
        <button aria-label="护眼模式"><Ico d="M.5 10C4 4.500 12 4.500 15.500 10 12 15.500 4 15.500.5 10zM8 0v3M3 1.500l1.500 2M13 1.500l-1.500 2"><circle cx="8" cy="10" r="2.500" /></Ico></button>
        <Sep className="mx-3" />
        <button aria-label="页面视图" className="flex h-6 w-6 items-center justify-center bg-[#d9dee6]"><Ico w={14} h={16} d="M.5.500h9l4 4v11H.5zM3.500 7.500h7M3.500 11.500h7" /></button>
        <button aria-label="大纲" className="ml-[7px]"><Ico d="M0 2.500h2M5 2.500h10M3 6.500h2M8 6.500h7M3 10.500h2M8 10.500h7M0 14.500h2M5 14.500h10" /></button>
        <button aria-label="阅读版式" className="ml-[9px]"><Ico d="M.5 1.500H6l2 1.500 2-1.500h5.500v12H10L8 15l-2-1.500H.5zM8 3v12" /></button>
        <button aria-label="Web版式" className="ml-[10px]"><Ico d="M1 5.500h14M1 10.500h14M8 1v14M8 1C3.500 5 3.500 11 8 15M8 1c4.500 4 4.500 10 0 14"><circle cx="8" cy="8" r="7" /></Ico></button>
        <button aria-label="写作模式" className="ml-[10px]"><Ico d="M1 14.500l2-5L11 1l3 3-8.500 8.500zM3 9.500l2.500 3M7 15h9" /></button>
        <Sep className="mx-[14px]" />
        <button aria-label="适应页面"><Ico d="M.5 4V1.500H4M12 1.500h3.500V4M15.500 12v2.500H12M4 14.500H.5V12M4.500 4.500h7v7h-7z" /></button>
        <button className="ml-[7px] flex items-center gap-1.5">80% <Caret /></button>
        <button aria-label="缩小" className="ml-3 h-0.5 w-[10px] bg-[#38435b]" />
        <input
          type="range"
          aria-label="缩放"
          min="0"
          max="100"
          defaultValue="36"
          className="ml-3 h-3 w-[145px] appearance-none bg-[linear-gradient(#46506a,#46506a)] bg-[length:100%_1px] bg-center bg-no-repeat [&::-webkit-slider-thumb]:h-3 [&::-webkit-slider-thumb]:w-3 [&::-webkit-slider-thumb]:appearance-none [&::-webkit-slider-thumb]:rounded-full [&::-webkit-slider-thumb]:border [&::-webkit-slider-thumb]:border-[#38435b] [&::-webkit-slider-thumb]:bg-[#f5f7fa]"
        />
        <button aria-label="放大" className="ml-[5px]"><Ico w={10} h={10}><path d="M5 0v10M0 5h10" strokeWidth="2" /></Ico></button>
        <button aria-label="全屏" className="ml-3"><Ico w={15} h={15} d="M.5 5V.5H5M.5.500l5 5M10 .5h4.500V5M14.500.500l-5 5M14.500 10v4.500H10M14.500 14.500l-5-5M5 14.500H.5V10M.5 14.500l5-5" /></button>
      </div>
    </footer>
  );
}

function Watermark() {
  return (
    <div className="pointer-events-none absolute right-[11px] bottom-2 z-20 flex items-center font-['Noto_Sans_CJK_SC',sans-serif] font-bold opacity-85">
      <svg width="44" height="42" viewBox="0 0 44 42" aria-hidden="true">
        <path d="M43 1C22-1 3 8 1 23c0 6 2 9 5 11 0-14 12-27 37-33z" fill="#3f9be0" />
        <path d="M33 13C20 12 10 19 9 27c0 5 5 7 11 5 5-2 6-6 4-9-1 5-5 7-8 6-4-4 5-13 17-16z" fill="#3a7fc8" />
        <path d="M34 13c9 4 10 13 4 20-6 6-19 10-32 7 14-1 25-6 27-14 1-5 0-9 1-13z" fill="#5bbd4a" />
        <path d="M6 40c8-1 15-4 20-8l-3 8c-6 2-12 1-17 0z" fill="#dfe04a" />
      </svg>
      <div className="flex flex-col whitespace-nowrap">
        <span className="text-[21px] leading-6 text-[#4c93d6]">极光下载站</span>
        <span className="font-['Liberation_Sans',sans-serif] text-[16px] leading-5 text-[#53be63]">www.xz7.com</span>
      </div>
    </div>
  );
}

function InputMethodBadge() {
  return (
    <div className="absolute bottom-[18px] left-[924px] z-20 flex h-[30px] w-[63px] items-center justify-center gap-[3px] rounded-md border border-[#777] bg-white font-['Roboto','Noto_Sans_CJK_SC',sans-serif] text-[13px] text-[#333] shadow-[0_2px_4px_#00000088]">
      CH
      <Ico w={10} h={12} d="M3.500 1c4 0 5.500 4 4.500 7-1 3-4.500 3.500-7 2.500 3 0 4.500-1.500 5-4 .3-2-.500-4.500-2.500-5.500z" />
      简
    </div>
  );
}

export default function App() {
  return (
    <div className="relative flex h-screen flex-col overflow-hidden bg-[#f5f7fa] font-['Noto_Sans','Noto_Sans_CJK_SC',sans-serif] text-xs">
      <TitleBar />
      <MenuBar />
      <Ribbon />
      <div className="flex min-h-0 flex-1">
        <LeftRail />
        <SectionPanel />
        <VerticalRuler />
        <main className="flex min-w-0 flex-1 flex-col overflow-hidden">
          <HorizontalRuler />
          <div className="flex min-h-0 flex-1 justify-center overflow-hidden pl-[9px]">
            <Page />
          </div>
        </main>
        <ScrollColumn />
        <RightRail />
      </div>
      <StatusBar />
      <InputMethodBadge />
      <Watermark />
    </div>
  );
}
